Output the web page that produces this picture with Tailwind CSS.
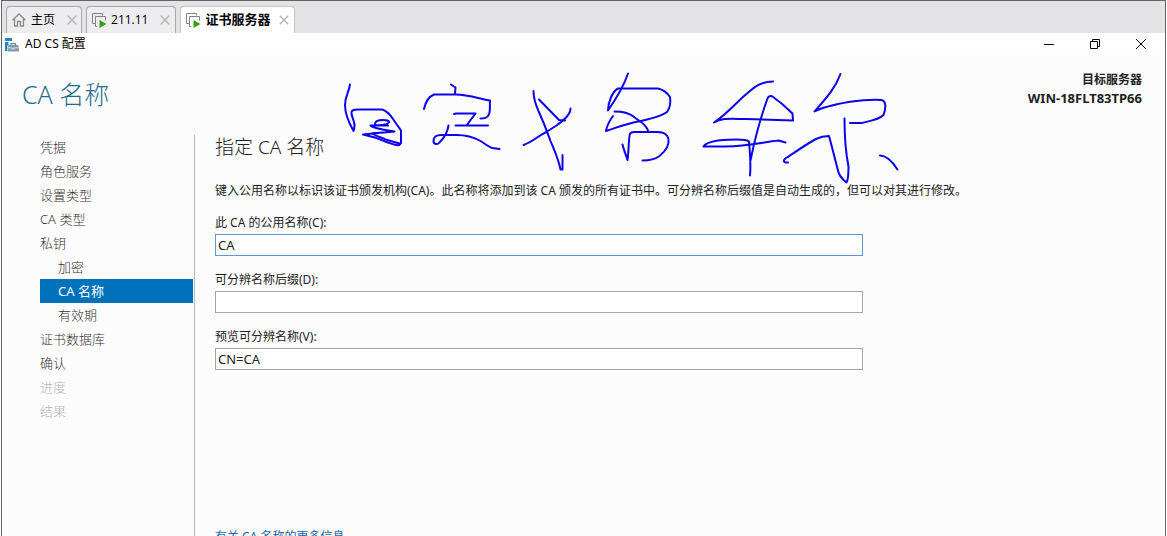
<!DOCTYPE html>
<html lang="zh-CN">
<head>
<meta charset="utf-8">
<meta name="viewport" content="width=device-width, initial-scale=1">
<title>AD CS 配置</title>
<script src="https://cdn.jsdelivr.net/npm/@tailwindcss/browser@4"></script>
</head>
<body class="bg-white font-['Noto_Sans','Noto_Sans_CJK_SC',sans-serif] text-xs text-[#222]">
<div class="relative ml-px mr-px flex h-screen flex-col overflow-hidden border-x border-t border-[#636368] bg-[#fcfcfc]">

  <!-- Virtual machine tabs -->
  <div role="tablist" class="flex h-8 shrink-0 items-end gap-1 bg-[#e3e3e5] pl-1 text-black">
    <div class="flex h-[27px] items-center rounded-t border border-b-0 border-[#a9a9ad] bg-[#ededef] px-1">
      <button role="tab" class="flex items-center gap-1">
        <svg class="size-4" viewBox="0 0 16 16" fill="none" stroke="#8a8a8a" stroke-width="1.3"><path d="M1.500 8.200 8 2l6.500 6.200M3.500 7v7h3V9.500h3V14h3V7"/></svg>
        <span>主页</span>
      </button>
      <button aria-label="关闭 主页" class="ml-3"><svg class="size-2.5" viewBox="0 0 10 10" stroke="#b4b4b4" stroke-width="1.4"><path d="m.8.8 8.400 8.400m0-8.400L.8 9.200"/></svg></button>
    </div>
    <div class="flex h-[27px] items-center rounded-t border border-b-0 border-[#a9a9ad] bg-[#ededef] px-[5px]">
      <button role="tab" class="flex items-center gap-1">
        <svg class="h-4 w-[15px]" viewBox="0 0 15 16" fill="none" stroke="#858585"><path d="M3.500 11.500h-3V1.500h10v2M5 14.500H3.500v-10h10v4"/><path d="m7.500 8 7 4-7 4z" fill="#419b16" stroke="none"/></svg>
        <span class="font-['Open_Sans','Noto_Sans_CJK_SC',sans-serif]">211.11</span>
      </button>
      <button aria-label="关闭 211.11" class="ml-3"><svg class="size-2.5" viewBox="0 0 10 10" stroke="#b4b4b4" stroke-width="1.4"><path d="m.8.8 8.400 8.400m0-8.400L.8 9.200"/></svg></button>
    </div>
    <div class="flex h-[27px] items-center rounded-t border border-b-0 border-[#c4c4c8] bg-white px-[5px]">
      <button role="tab" aria-selected="true" class="flex items-center gap-1">
        <svg class="h-4 w-[15px]" viewBox="0 0 15 16" fill="none" stroke="#858585"><path d="M3.500 11.500h-3V1.500h10v2M5 14.500H3.500v-10h10v4"/><path d="m7.500 8 7 4-7 4z" fill="#419b16" stroke="none"/></svg>
        <span class="text-[13px] font-bold">证书服务器</span>
      </button>
      <button aria-label="关闭 证书服务器" class="ml-2"><svg class="size-2.5" viewBox="0 0 10 10" stroke="#b4b4b4" stroke-width="1.4"><path d="m.8.8 8.400 8.400m0-8.400L.8 9.200"/></svg></button>
    </div>
  </div>

  <!-- Window title bar -->
  <header class="flex h-[22px] shrink-0 items-center bg-white pl-[3px] pr-[18px] text-black">
    <svg class="h-[15px] w-[14px]" viewBox="0 0 14 15"><path fill="#2583c4" d="M0 1h7v3H0zM0 5h3.500v3L2 9v5H0z"/><path fill="none" stroke="#6d8799" stroke-width="1.200" d="M6 8.500V6.600h4.500v1.900"/><path fill="#7d9bb0" d="M3.500 8h9.500l1 2v4.500H2.500V10z"/><path fill="none" stroke="#dce8f0" d="M2.500 10.800h4m3 0H14M7 10.500v1.500h2v-1.500"/></svg>
    <span class="ml-[6px]">AD CS 配置</span>
    <div class="ml-auto flex items-center gap-[34px]">
      <button aria-label="最小化"><svg class="size-3" viewBox="0 0 12 12" stroke="#000"><path d="M1 6.500h10"/></svg></button>
      <button aria-label="还原"><svg class="size-3" viewBox="0 0 12 12" fill="none" stroke="#000"><path d="M1.500 3.500h7v7h-7zM3.500 3V1.500h7v7H9"/></svg></button>
      <button aria-label="关闭"><svg class="size-3" viewBox="0 0 12 12" stroke="#000"><path d="m1 1 10 10m0-10L1 11"/></svg></button>
    </div>
  </header>

  <div class="flex h-20 shrink-0 items-start justify-between pl-5 pr-[23px] pt-[15px]">
    <h1 class="pt-[8px] text-[25px] leading-8 font-light text-[#1f6c8c]">CA 名称</h1>
    <div class="text-right leading-[19px] font-bold">
      <p>目标服务器</p>
      <p class="text-[13px] leading-[19px]">WIN-18FLT83TP66</p>
    </div>
  </div>

  <div class="flex min-h-0 flex-1">
    <nav aria-label="向导步骤" class="w-[193px] shrink-0 border-r border-[#b9b9b9] pl-[38px] pr-px text-[13px] leading-6 font-light text-[#333]">
      <a href="#" class="block">凭据</a>
      <a href="#" class="block">角色服务</a>
      <a href="#" class="block">设置类型</a>
      <a href="#" class="block">CA 类型</a>
      <a href="#" class="block">私钥</a>
      <a href="#" class="block pl-[18px]">加密</a>
      <a href="#" aria-current="step" class="block bg-[#0072bc] pl-[18px] font-normal text-white">CA 名称</a>
      <a href="#" class="block pl-[18px]">有效期</a>
      <a href="#" class="block">证书数据库</a>
      <a href="#" class="block">确认</a>
      <a href="#" aria-disabled="true" class="block text-[#b5b5b5]">进度</a>
      <a href="#" aria-disabled="true" class="block text-[#b5b5b5]">结果</a>
    </nav>

    <main class="min-w-0 flex-1 pl-5 pr-6">
      <h2 class="text-[19px] leading-6 font-light text-[#222]">指定 CA 名称</h2>
      <p class="mt-[22px] leading-5">键入公用名称以标识该证书颁发机构(CA)。此名称将添加到该 CA 颁发的所有证书中。可分辨名称后缀值是自动生成的，但可以对其进行修改。</p>
      <form class="mt-3 flex max-w-[648px] flex-col gap-[14px]">
        <div class="flex flex-col">
          <label for="cn" class="h-[21px] leading-5">此 CA 的公用名称(C):</label>
          <input id="cn" type="text" value="CA" class="h-[22px] border border-[#5b96cf] bg-white px-0.5 text-[13px] outline-none">
        </div>
        <div class="flex flex-col">
          <label for="suffix" class="h-[21px] leading-5">可分辨名称后缀(D):</label>
          <input id="suffix" type="text" class="h-[22px] border border-[#a5a5a5] bg-white px-0.5 text-[13px] outline-none">
        </div>
        <div class="flex flex-col">
          <label for="preview" class="h-[21px] leading-5">预览可分辨名称(V):</label>
          <input id="preview" type="text" readonly value="CN=CA" class="h-[22px] border border-[#a5a5a5] bg-white px-0.5 text-[13px] outline-none">
        </div>
      </form>
      <a href="#" class="mt-[157px] block w-fit leading-5 text-[#1a66a8]">有关 CA 名称的更多信息</a>
    </main>
  </div>

  <!-- Handwritten pen annotation over the wizard -->
  <svg aria-hidden="true" class="pointer-events-none absolute left-[328px] top-[59px] h-[130px] w-[580px]" viewBox="330 60 580 130" fill="none" stroke="#0c00ee" stroke-width="2" stroke-linecap="round" stroke-linejoin="round">
    <path d="M350 84.500C349 92 345 96 345 105c0 10 4 18 8.500 26 1-3 1.500-6 .5-9-1-4-3-7-2.500-10 .5-2 3-2.500 6-2.500h24.500c4 1 8 5 11 9.500l8 11.500v12.500c-1 2-3 2.500-5 2-8-2-15-5-21-7.500l-12-3 15-1.500"/>
    <path d="M376 125.500c5-.5 11-.5 13-3 .5-2-3-2.500-6-2.500-4 0-8 1-8 4 0 2 7 1.500 13 1.500l-17.500 0c3 3 8 2.500 12 4l12 2c-6 .5-15 1-22 2 4 3 9 4 13 6l14 4"/>
    <path d="M451 84.500l4.500 3-.5 6M424 109c1-5 4-12 10-14.500h22c11 0 23 4 34 6-.5 6 1 12-2 15.500-1.500 2-4 2.500-7.500 2.500M454 114l2-.5h19.500l-9 12M455.500 125.500H488M448.500 125.500c-1 7-6 14-9 17-2 2.500-6 2-6-1.500 0-5 3-6 8-6h15c9 0 17 2 24 6 5 3 8 6 12 7l7 1"/>
    <path d="M533.500 91c0 9 2 13 5 20 6 13 8 19 12 30 4 10 8 18 10 28.500h2V155M539 99.500l20 20.500 6 .5M570.500 108.500c0 6-6 11-14 17l-11 7c-7 3-12 9-22 12.500"/>
    <path d="M628 73.500c-4 12-11 24-20 37 0-7 4-19 10-22h40c5 1 9 4 12 8.500 1 6 0 11-3 15-8 6-19 7-29 9.500-11 2-21 6-32 9.500 1-6 4-11 7-15M614.500 111.500c8 0 14 1 19 5 6 5 12 7 14.500 14M622.500 144.500c1 5 3 9 5 15.500 1-6 1-16 2-24 0-3 2-4 5-4h23c5 0 10 2 11 7 1 7-4 13-9 17-4 3-8 4.500-17 4.500"/>
    <path d="M773 81.500c-12 0-18 5-26 12-11 9-19 20-33 29 8-5 17-3.500 32-3.500l47 1.500-.5-7c-6-6-13-12-20-17-2-1-4-.5-5 2-8 22-13 42-17 62M750 175.500c1-10 0-23-1-34-3-3-20-2-31-1-6 1-13 3-14.500 6h22c22-.5 36-4 53-6l7 2"/>
    <path d="M840.500 74c-5 14-14 24-26 37.500 9-5 20-7 34-9.500 11-1.500 22-3 33-2 5 1 4.500 9 2 15-5 5-14 6-22 8h-11.500M844.500 118.500c0 17 1 33 4 48 0 6 0 13-2 16-4-3-8-7-9-14-3-11-5-20-8.500-32.500-5 0-9 1-13 3-11 6-19 12-30 19-3 2-3 5 2 4.500M880 155.500c7 0 13 7 17.500 14"/>
  </svg>
</div>
</body>
</html>
